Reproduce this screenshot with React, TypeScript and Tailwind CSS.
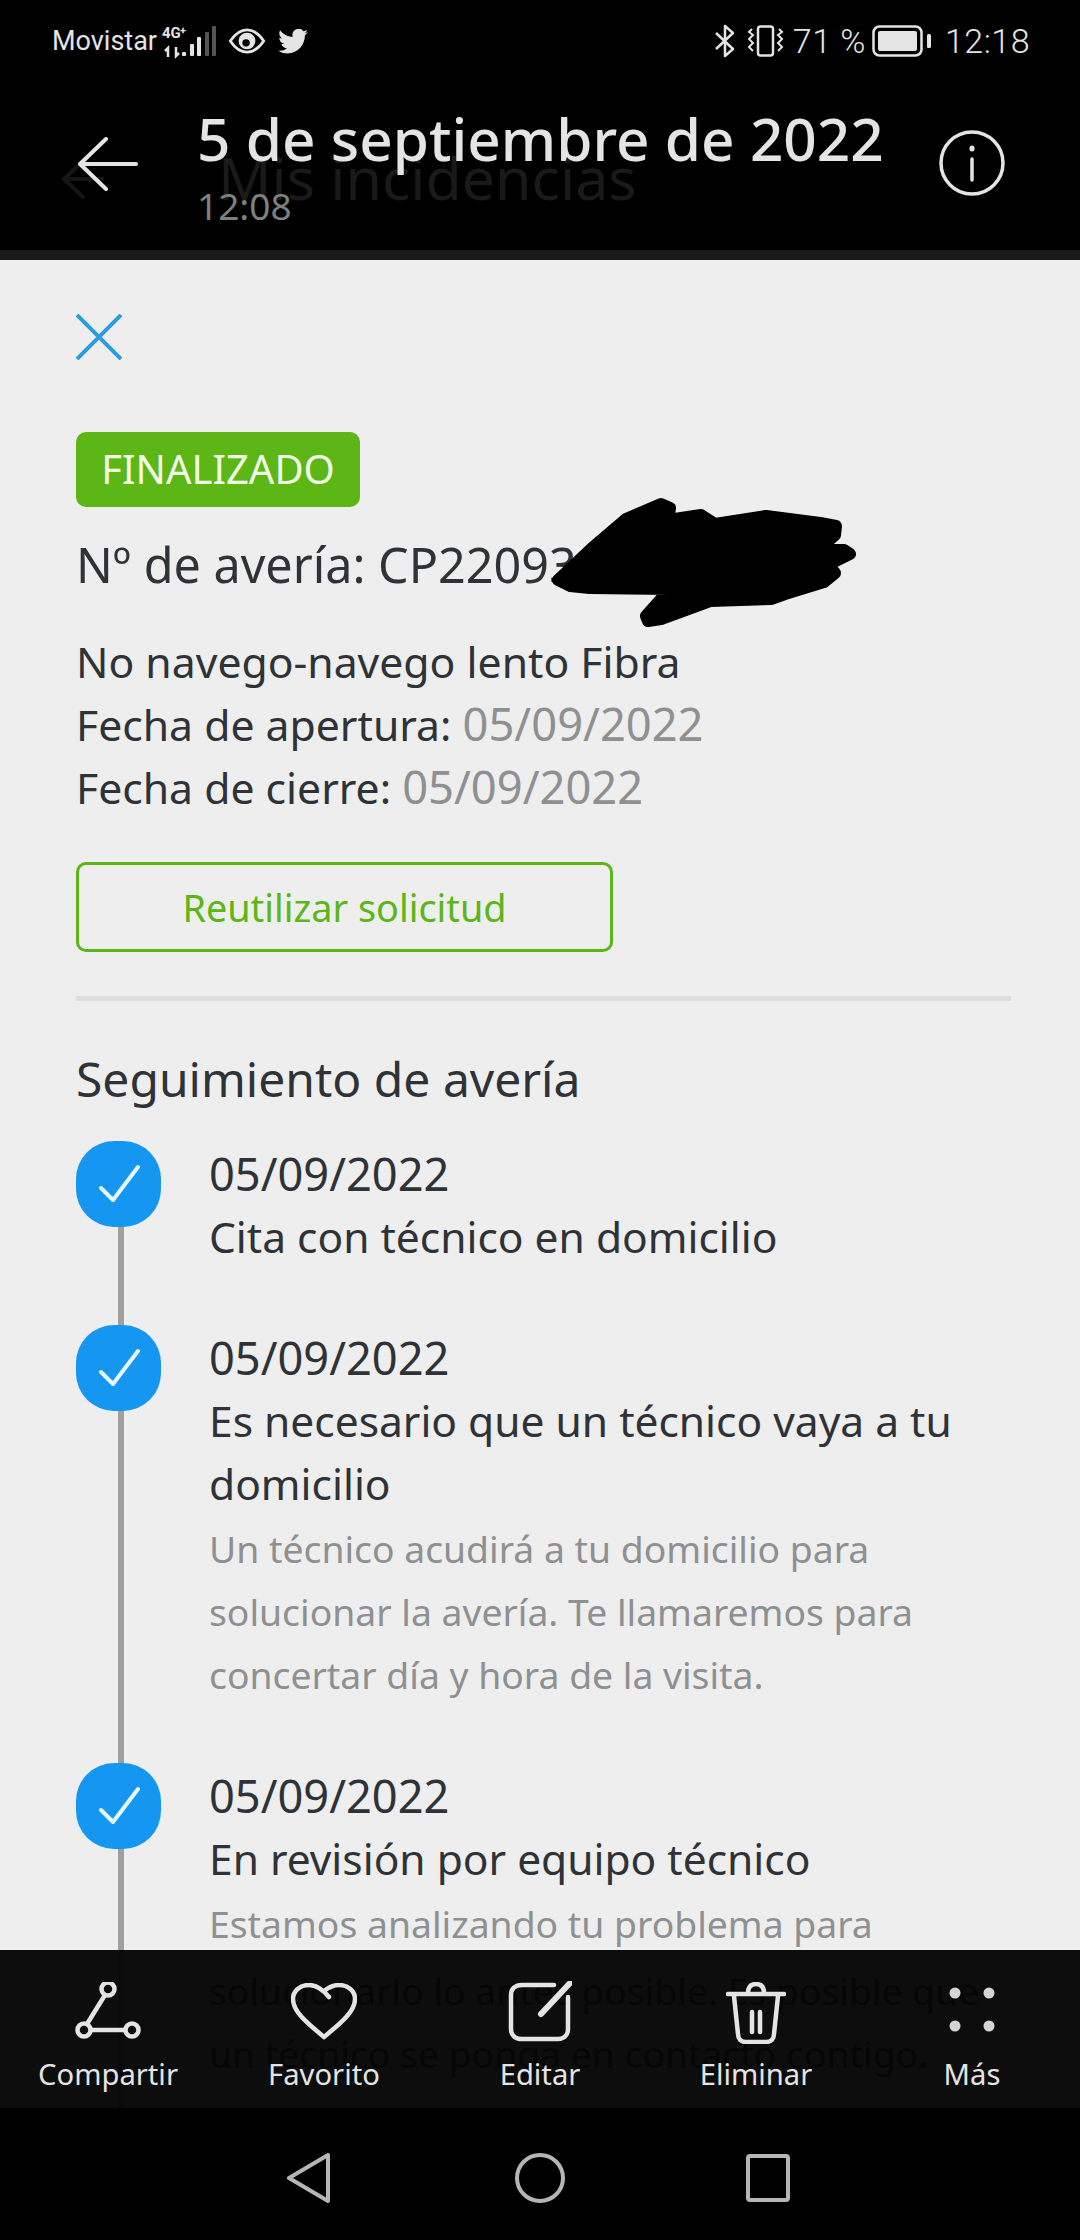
import React from "react";

const Check = () => (
  <div className="relative z-10 w-[85px] h-[86px] shrink-0 rounded-[38px] bg-[#1596f0] flex items-center justify-center">
    <svg width="42" height="40" viewBox="0 0 42 40" fill="none" stroke="#e8f8ff" strokeWidth="4" strokeLinecap="round" strokeLinejoin="round">
      <path d="M3 24 L15 36 L40 3" />
    </svg>
  </div>
);

const Item = ({ title, desc, last }: { title: React.ReactNode; desc?: React.ReactNode; last?: boolean }) => (
  <div className={last ? "relative flex gap-[48px]" : "relative flex gap-[48px] pb-[57px]"}>
    <div className="absolute left-[42px] top-[60px] bottom-0 w-[6px] bg-[#a0a0a0]" style={last ? { bottom: -200 } : undefined} />
    <Check />
    <div className="mt-[1px] text-[42.5px] leading-[63px] text-[#2f3237]">
      <div className="text-[45.2px]">05/09/2022</div>
      <div>{title}</div>
      {desc && <div className="mt-[2px] text-[37.3px] text-[#8f9092]">{desc}</div>}
    </div>
  </div>
);

const BarItem = ({ label, children }: { label: string; children: React.ReactNode }) => (
  <div className="relative z-10 w-[216px] flex flex-col items-center">
    <div className="h-[66px] flex items-center justify-center">{children}</div>
    <div className="mt-[10px] text-[29.2px] leading-[36px] text-[#e4e4e4]">{label}</div>
  </div>
);

export default function App() {
  return (
    <div className="w-[1080px] h-[2240px] flex flex-col overflow-hidden bg-black font-['Noto_Sans',sans-serif]">
      {/* header */}
      <header className="relative h-[260px] shrink-0 bg-black border-b-[10px] border-[#1a1a1a]">
        <div className="h-[80px] flex items-center justify-between pl-[52px] pr-[50px] pt-[2px] text-[#e4e4e4] font-['Roboto',sans-serif]">
          <div className="flex items-center">
            <span className="text-[27px] leading-none">Movistar</span>
            <svg className="ml-[3px]" width="58" height="36" viewBox="0 0 58 36" fill="#e4e4e4">
              <text x="2" y="15" fontSize="15" fontWeight="700" fontFamily="Roboto, sans-serif">4G</text>
              <text x="20" y="11" fontSize="11" fontWeight="700" fontFamily="Roboto, sans-serif">+</text>
              <path d="M8 34 V25 L5 28 M16 24 V33 L19 30" fill="none" stroke="#e4e4e4" strokeWidth="2.500" />
              <rect x="22" y="29" width="4" height="4" rx="1" />
              <rect x="30" y="21" width="4" height="12" rx="1" />
              <rect x="37" y="14" width="4" height="19" rx="1" />
              <rect x="45" y="9" width="4" height="24" rx="1" fill="#555" />
              <rect x="52" y="3" width="4" height="30" rx="1" fill="#555" />
            </svg>
            <svg className="ml-[10px]" width="38" height="26" viewBox="0 0 40 28" fill="none">
              <path d="M2 14 C8 5 14 2 20 2 C26 2 32 5 38 14 C32 23 26 26 20 26 C14 26 8 23 2 14 Z" stroke="#e4e4e4" strokeWidth="3" />
              <circle cx="20" cy="14" r="9" fill="#e4e4e4" />
              <circle cx="19" cy="16" r="4" fill="#000" />
            </svg>
            <svg className="ml-[12px]" width="30" height="25" viewBox="0 0 24 20" fill="#e4e4e4">
              <path d="M24 2.400c-.9.4-1.800.7-2.800.8 1-.6 1.800-1.600 2.200-2.700-.9.6-2 1-3.100 1.200A4.900 4.900 0 0 0 11.800 6.200C7.700 6 4.100 4 1.700.9c-1.300 2.200-.7 5.100 1.500 6.600-.8 0-1.600-.2-2.200-.6 0 2.300 1.600 4.400 3.900 4.900-.7.2-1.500.2-2.200.1.600 2 2.400 3.400 4.600 3.400A9.900 9.900 0 0 1 0 17.300 14 14 0 0 0 7.500 19.500c9.100 0 14.300-7.700 14-14.600 1-.7 1.800-1.600 2.500-2.500Z" />
            </svg>
          </div>
          <div className="flex items-center">
            <svg width="22" height="34" viewBox="0 0 22 34" fill="none" stroke="#e4e4e4" strokeWidth="2.500" strokeLinejoin="round">
              <path d="M2 9 L19 25 L11 32 V2 L19 9 L2 25" />
            </svg>
            <svg className="ml-[11px]" width="38" height="32" viewBox="0 0 38 32" fill="none" stroke="#e4e4e4" strokeWidth="2.500">
              <rect x="11" y="1.500" width="15" height="29" rx="2.500" />
              <path d="M5 4 L2 7 L6 10 L2 14 L6 18 L2 22 L6 26" strokeWidth="2" />
              <path d="M32 4 L35 7 L31 10 L35 14 L31 18 L35 22 L31 26" strokeWidth="2" />
            </svg>
            <span className="ml-[8px] text-[34px] leading-none font-light tracking-[0.5px]">71 %</span>
            <svg className="ml-[6px]" width="59" height="32" viewBox="0 0 59 32" fill="none">
              <rect x="1.500" y="1.500" width="48" height="29" rx="6" stroke="#e4e4e4" strokeWidth="2.500" />
              <rect x="6" y="6" width="39" height="20" rx="2" fill="#e4e4e4" />
              <rect x="55" y="9" width="4" height="14" rx="1.500" fill="#e4e4e4" />
            </svg>
            <span className="ml-[14px] text-[34px] leading-none font-light tracking-[0.5px]">12:18</span>
          </div>
        </div>

        {/* ghost of the page below the header */}
        <svg className="absolute left-[60px] top-[158px]" width="46" height="42" viewBox="0 0 46 42" fill="none" stroke="#161616" strokeWidth="4">
          <path d="M24 2 L4 21 L24 40 M4 21 H44" />
        </svg>
        <div className="absolute left-[218px] top-[141px] text-[59px] leading-[72px] text-[#1a1a1a]">Mis incidencias</div>

        <div className="relative flex pl-[78px]">
          <svg className="mt-[57px]" width="60" height="54" viewBox="0 0 60 54" fill="none" stroke="#e4e4e4" strokeWidth="4" strokeLinecap="round" strokeLinejoin="round">
            <path d="M28 2 L2 27 L28 52 M2 27 H58" />
          </svg>
          <div className="ml-[59px] mt-[18px]">
            <div className="text-[58.5px] leading-[80px] font-medium text-[#e4e4e4]">5 de septiembre de 2022</div>
            <div className="mt-[5px] text-[37px] leading-[46px] text-[#808080]">12:08</div>
          </div>
          <svg className="absolute left-[939px] top-[50px]" width="66" height="66" viewBox="0 0 66 66" fill="none" stroke="#e4e4e4" strokeWidth="3.500" strokeLinecap="round">
            <circle cx="33" cy="33" r="31" />
            <path d="M33 29 V50" />
            <path d="M33 18 V19" strokeWidth="5" />
          </svg>
        </div>
      </header>

      {/* scrolling page */}
      <main className="relative flex-1 min-h-0 overflow-hidden bg-[#eeeeee] px-[76px] pt-[54px] text-[#2f3237]">
        <svg width="46" height="46" viewBox="0 0 46 46" fill="none" stroke="#2a9ddf" strokeWidth="4">
          <path d="M1 1 L45 45 M45 1 L1 45" />
        </svg>
        <div className="mt-[72px] w-[284px] h-[75px] rounded-[10px] bg-[#5cb615] flex items-center justify-center pb-[2px] text-[40px] text-[#f2fbe6]">FINALIZADO</div>

        <div className="relative mt-[27px] text-[48.5px] leading-[60px]">
          Nº de avería: CP22093
          <svg className="absolute left-[476px] top-[-38px]" width="304" height="132" viewBox="-8 -2 304 132" fill="#000" stroke="#000" strokeWidth="12" strokeLinejoin="round">
            <path d="M-2 82 L32 50 L66 21 L101 6 L110 10 L108 22 L141 17 L155 26 L206 18 L260 25 L276 28 L275 37 L258 52 L284 52 L290 56 L268 67 L275 75 L264 84 L225 96 L211 101 L150 103 L101 121 L88 123 L86 118 L110 91 L30 90 L10 88 Z" />
          </svg>
        </div>

        <div className="mt-[36px] text-[42.7px] leading-[63px]">
          <div>No navego-navego lento Fibra</div>
          <div>Fecha de apertura: <span className="text-[45.3px] leading-none text-[#8f9092]">05/09/2022</span></div>
          <div>Fecha de cierre: <span className="text-[45.3px] leading-none text-[#8f9092]">05/09/2022</span></div>
        </div>

        <div className="mt-[43px] w-[537px] h-[90px] rounded-[10px] border-[3px] border-[#5cb615] flex items-center justify-center pt-[3px] text-[37.8px] text-[#5cb615]">Reutilizar solicitud</div>

        <div className="mt-[44px] w-[935px] h-[5px] bg-[#dddddd]" />

        <div className="mt-[46px] text-[48px] leading-[64px]">Seguimiento de avería</div>

        <div className="mt-[30px]">
          <Item title="Cita con técnico en domicilio" />
          <Item
            title={<>Es necesario que un técnico vaya a tu<br />domicilio</>}
            desc={<>Un técnico acudirá a tu domicilio para<br />solucionar la avería. Te llamaremos para<br />concertar día y hora de la visita.</>}
          />
          <Item
            last
            title="En revisión por equipo técnico"
            desc={<>Estamos analizando tu problema para</>}
          />
        </div>
      </main>

      {/* action bar */}
      <footer className="relative h-[158px] shrink-0 bg-[#0d0d0d] flex pt-[30px]">
        <div className="absolute left-[209px] top-[9px] text-[37.3px] leading-[63px] text-[#060606] whitespace-nowrap">
          <div>solucionarlo lo antes posible. Es posible que</div>
          <div>un técnico se ponga en contacto contigo.</div>
        </div>
        <div className="absolute left-[118px] top-0 bottom-0 w-[6px] bg-[#0a0a0a]" />
        <BarItem label="Compartir">
          <svg width="66" height="62" viewBox="0 0 66 62" fill="none" stroke="#e4e4e4" strokeWidth="4.500">
            <circle cx="33" cy="7" r="6.500" />
            <circle cx="9" cy="48" r="6.500" />
            <circle cx="57" cy="48" r="6.500" />
            <path d="M30 13 L12 42 M16 48 H50" />
          </svg>
        </BarItem>
        <BarItem label="Favorito">
          <svg width="66" height="60" viewBox="0 0 66 60" fill="none" stroke="#e4e4e4" strokeWidth="4.500" strokeLinejoin="round" strokeLinecap="round">
            <path d="M33 54 C20 43 2 30 2 16 C2 8 9 2 18 2 C26 2 33 8 38 14 M33 54 C46 43 64 30 64 16 C64 8 57 2 48 2 C43 2 38 4 33 8" />
          </svg>
        </BarItem>
        <BarItem label="Editar">
          <svg width="64" height="64" viewBox="0 0 64 64" fill="none" stroke="#e4e4e4" strokeWidth="4.500" strokeLinecap="round">
            <path d="M46 4 H14 C7 4 3 8 3 14 V48 C3 54 7 58 14 58 H50 C56 58 60 54 60 48 V16" />
            <path d="M63 1 L33 33" strokeWidth="6" />
          </svg>
        </BarItem>
        <BarItem label="Eliminar">
          <svg width="60" height="62" viewBox="0 0 60 62" fill="none" stroke="#e4e4e4" strokeWidth="4.500" strokeLinecap="round" strokeLinejoin="round">
            <path d="M2 12 H58 M22 11 C22 5 25 2 30 2 C35 2 38 5 38 11" />
            <path d="M8 14 L12 52 C12 57 15 60 20 60 H40 C45 60 48 57 48 52 L52 14" />
            <path d="M26 30 V50 M34 30 V50" />
          </svg>
        </BarItem>
        <BarItem label="Más">
          <svg width="46" height="52" viewBox="0 0 46 52" fill="#d4d4d4">
            <circle cx="6" cy="6" r="5.500" />
            <circle cx="40" cy="6" r="5.500" />
            <circle cx="6" cy="39" r="5.500" />
            <circle cx="40" cy="39" r="5.500" />
          </svg>
        </BarItem>
      </footer>

      {/* system navigation */}
      <nav className="h-[132px] shrink-0 bg-black flex items-center justify-center gap-[184px] pt-[8px] pr-[3px]">
        <svg width="44" height="50" viewBox="0 0 44 50" fill="none" stroke="#b5b5b5" strokeWidth="4" strokeLinejoin="round">
          <path d="M41 2 V48 L2 25 Z" />
        </svg>
        <svg width="50" height="50" viewBox="0 0 50 50" fill="none" stroke="#b5b5b5" strokeWidth="4">
          <circle cx="25" cy="25" r="23" />
        </svg>
        <svg className="ml-[-3px]" width="44" height="48" viewBox="0 0 44 48" fill="none" stroke="#b5b5b5" strokeWidth="4" strokeLinejoin="round">
          <rect x="2" y="2" width="40" height="44" rx="2" />
        </svg>
      </nav>
    </div>
  );
}
